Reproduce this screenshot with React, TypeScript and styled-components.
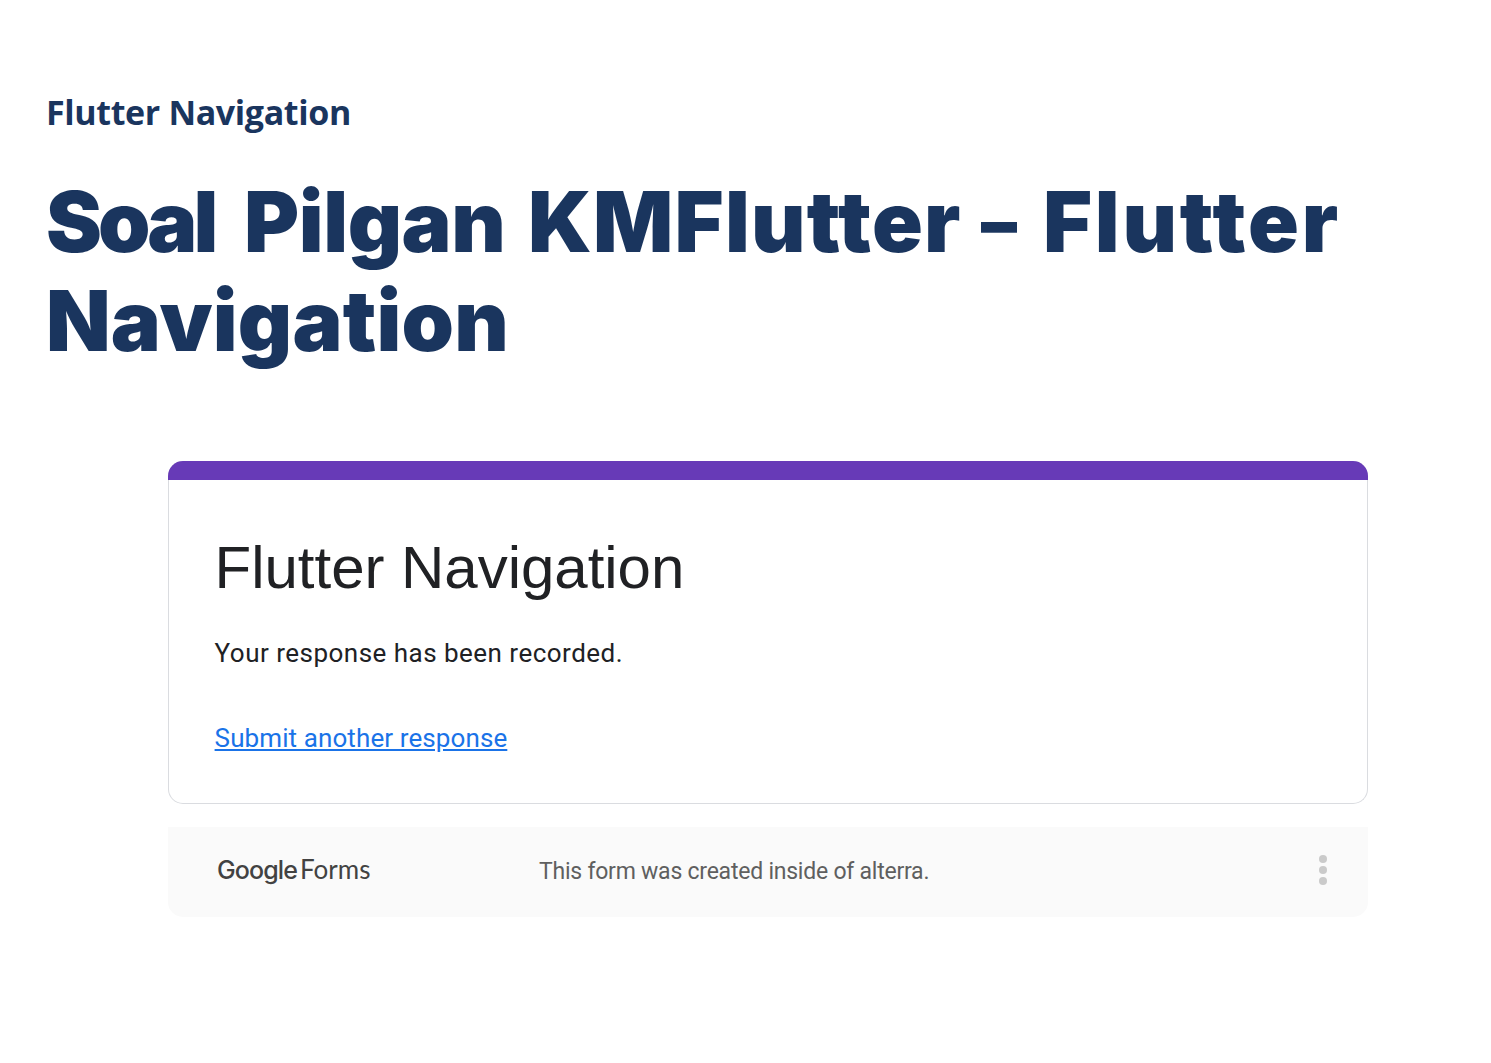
import React from "react";
import styled, { createGlobalStyle } from "styled-components";

const Global = createGlobalStyle`
  *{box-sizing:border-box}
  body{margin:0;background:#fff}
`;
const Page = styled.main`
  min-height:1063px;padding:86px 46px 0;color:#1a355e;
`;
const Eyebrow = styled.h2`
  margin:0;font:700 34px/52px "Open Sans",sans-serif;letter-spacing:-.36px;white-space:nowrap;
`;
const Title = styled.h1`
  margin:34px 0 0;font:900 84px/99px Inter,sans-serif;
`;
const Line = styled.span`
  display:flex;align-items:flex-start;white-space:pre;
`;
const Word = styled.span<{ $width: number; $spacing: number; $size?: number }>`
  flex:none;width:${(p) => p.$width}px;letter-spacing:${(p) => p.$spacing}px;
  font-size:${(p) => p.$size ?? 84}px;
`;
const Form = styled.section`
  width:1200px;margin:91px 0 0 122px;
`;
const Card = styled.article`
  height:343px;border:1px solid #dadce0;border-top:0;border-radius:15px;
`;
const Accent = styled.div`
  height:19px;margin:0 -1px;background:#673ab7;border-radius:15px 15px 0 0;
`;
const Content = styled.div`
  padding:50px 45.6px 0;display:flex;flex-direction:column;align-items:flex-start;
`;
const FormTitle = styled.h3`
  margin:0;color:#202124;font:400 60px/75px "Liberation Sans",Arial,sans-serif;letter-spacing:-.03px;
`;
const Message = styled.p`
  margin:29px 0 0;color:#202124;font:400 26px/38px Roboto,sans-serif;letter-spacing:.48px;
`;
const Again = styled.a`
  margin-top:47px;color:#1a73e8;font:400 26px/38px Roboto,sans-serif;letter-spacing:.1px;text-decoration:underline;
`;
const Footer = styled.footer`
  margin-top:23px;height:90px;background:#fafafa;border-radius:0 0 15px 15px;
  display:flex;align-items:center;padding:0 41.5px 0 49px;color:#5f5f5f;
`;
const Brand = styled.div`
  width:322px;display:flex;align-items:baseline;gap:3px;margin-top:-5px;color:#424242;font:400 26px/34px Lato,sans-serif;
`;
const Google = styled.span`
  font:500 25px/34px Inter,sans-serif;letter-spacing:-.9px;
`;
const Note = styled.span`
  flex:1;font:400 23px/34px Roboto,sans-serif;letter-spacing:-.23px;
`;
const Menu = styled.div`
  display:grid;gap:3px;margin-top:-4px;
`;
const Dot = styled.i`
  width:8px;height:8px;border-radius:50%;background:#cacaca;
`;

export default function App() {
  return (
    <Page>
      <Global />
      <Eyebrow>Flutter Navigation</Eyebrow>
      <Title>
        <Line>
          <Word $width={198} $spacing={-4}>Soal </Word>
          <Word $width={284} $spacing={-0.4}>Pilgan </Word>
          <Word $width={453} $spacing={1.25}>KMFlutter </Word>
          <Word $width={62} $spacing={0} $size={72}>– </Word>
          <Word $width={300} $spacing={2.8}>Flutter</Word>
        </Line>
        <Line><Word $width={470} $spacing={0.2}>Navigation</Word></Line>
      </Title>
      <Form>
        <Card>
          <Accent />
          <Content>
            <FormTitle>Flutter Navigation</FormTitle>
            <Message>Your response has been recorded.</Message>
            <Again>Submit another response</Again>
          </Content>
        </Card>
        <Footer>
          <Brand><Google>Google</Google><span>Forms</span></Brand>
          <Note>This form was created inside of alterra.</Note>
          <Menu><Dot /><Dot /><Dot /></Menu>
        </Footer>
      </Form>
    </Page>
  );
}
